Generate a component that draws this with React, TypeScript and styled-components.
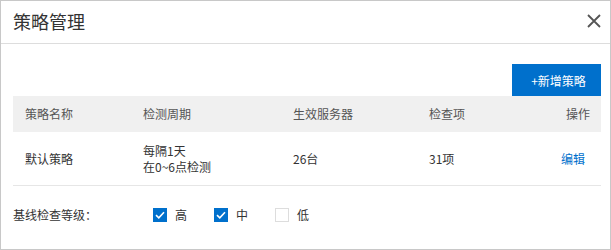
import styled, { createGlobalStyle } from 'styled-components';

const GlobalStyle = createGlobalStyle`
  html, body {
    margin: 0;
    padding: 0;
    background: #ffffff;
  }

  * {
    box-sizing: border-box;
  }
`;

const FONT = `'Noto Sans CJK SC', 'Open Sans', sans-serif`;

const Dialog = styled.div`
  width: 611px;
  height: 250px;
  border: 1px solid #c8c8c8;
  background: #ffffff;
  font-family: ${FONT};
  color: #333333;
  display: flex;
  flex-direction: column;
`;

const Header = styled.div`
  height: 43px;
  display: flex;
  align-items: center;
  justify-content: space-between;
  padding: 0 9px 0 12px;
  border-bottom: 1px solid #dddddd;
  flex-shrink: 0;
`;

const Title = styled.h1`
  margin: 0;
  font-size: 18px;
  font-weight: 400;
  line-height: 24px;
  color: #333333;
  margin-top: -2px;
`;

const CloseButton = styled.button`
  width: 14px;
  height: 14px;
  padding: 0;
  border: none;
  background: none;
  display: flex;
  cursor: pointer;
  margin-top: -2px;
`;

const Body = styled.div`
  padding: 20px 9px 0 12px;
  display: flex;
  flex-direction: column;
`;

const Toolbar = styled.div`
  display: flex;
  justify-content: flex-end;
`;

const PrimaryButton = styled.button`
  width: 89px;
  height: 32px;
  border: none;
  background: #0070cc;
  color: #ffffff;
  font-family: ${FONT};
  font-size: 12px;
  padding: 0 0 0 4px;
  cursor: pointer;
`;

const Row = styled.div<{ $head?: boolean }>`
  display: grid;
  grid-template-columns: 118px 150px 136px 1fr 80px;
  align-items: center;
  height: ${(props) => (props.$head ? '36px' : '54px')};
  background: ${(props) => (props.$head ? '#f0f0f0' : '#ffffff')};
  border-bottom: ${(props) => (props.$head ? 'none' : '1px solid #e6e6e6')};
  color: ${(props) => (props.$head ? '#555555' : '#333333')};
  font-size: 12px;
`;

const Cell = styled.div<{ $right?: boolean; $link?: boolean; $pr?: number }>`
  padding-left: 12px;
  padding-right: ${(props) => props.$pr ?? 0}px;
  text-align: ${(props) => (props.$right ? 'right' : 'left')};
  color: ${(props) => (props.$link ? '#0070cc' : 'inherit')};
  line-height: 16px;
`;

const Levels = styled.div`
  display: flex;
  align-items: center;
  margin-top: 20px;
  font-size: 12px;
`;

const LevelLabel = styled.span`
  width: 140px;
  color: #333333;
`;

const Option = styled.label`
  display: flex;
  align-items: center;
  gap: 8px;
  margin-right: 27px;
  color: #333333;
`;

const Box = styled.span<{ $checked?: boolean }>`
  width: 14px;
  height: 14px;
  display: flex;
  align-items: center;
  justify-content: center;
  background: ${(props) => (props.$checked ? '#0070cc' : '#ffffff')};
  border: 1px solid ${(props) => (props.$checked ? '#0070cc' : '#dddddd')};
`;

const CheckIcon = () => (
  <svg width="10" height="8" viewBox="0 0 10 8">
    <path d="M1 4.2 L3.8 6.8 L9 1.2" fill="none" stroke="#ffffff" strokeWidth="1.6" />
  </svg>
);

const levels = [
  { name: '高', checked: true },
  { name: '中', checked: true },
  { name: '低', checked: false },
];

export default function App() {
  return (
    <>
      <GlobalStyle />
      <Dialog>
        <Header>
          <Title>策略管理</Title>
          <CloseButton aria-label="关闭">
            <svg width="14" height="14" viewBox="0 0 14 14">
              <path d="M1 1 L13 13 M13 1 L1 13" stroke="#555555" strokeWidth="1.8" />
            </svg>
          </CloseButton>
        </Header>

        <Body>
          <Toolbar>
            <PrimaryButton>+新增策略</PrimaryButton>
          </Toolbar>

          <Row $head>
            <Cell>策略名称</Cell>
            <Cell>检测周期</Cell>
            <Cell>生效服务器</Cell>
            <Cell>检查项</Cell>
            <Cell $right $pr={11}>
              操作
            </Cell>
          </Row>

          <Row>
            <Cell>默认策略</Cell>
            <Cell>
              每隔1天
              <br />
              在0~6点检测
            </Cell>
            <Cell>26台</Cell>
            <Cell>31项</Cell>
            <Cell $right $link $pr={16}>
              编辑
            </Cell>
          </Row>

          <Levels>
            <LevelLabel>基线检查等级：</LevelLabel>
            {levels.map((level) => (
              <Option key={level.name}>
                <Box $checked={level.checked}>{level.checked && <CheckIcon />}</Box>
                {level.name}
              </Option>
            ))}
          </Levels>
        </Body>
      </Dialog>
    </>
  );
}
